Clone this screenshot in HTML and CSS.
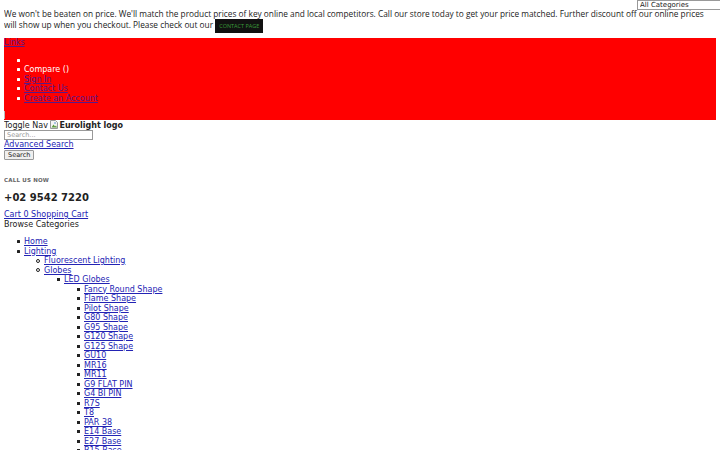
FILE: index.html
```html
<!DOCTYPE html>
<html lang="en">
<head>
<meta charset="utf-8">
<title>Eurolight</title>
<link rel="stylesheet" href="styles.css">
</head>
<body>
<select class="cat-select"><option>All Categories</option></select>
<div class="promo">We won't be beaten on price. We'll match the product prices of key online and local competitors. Call our store today to get your price matched. Further discount off our online prices will show up when you checkout. Please check out our <a class="promo-btn" href="#">CONTACT PAGE</a></div>
<div class="topbar">
  <a class="links-toggle" href="#">Links</a>
  <ul class="header-links">
    <li></li>
    <li>Compare ()</li>
    <li><a href="#">Sign In</a></li>
    <li><a href="#">Contact Us</a></li>
    <li><a href="#">Create an Account</a></li>
  </ul>
  <span class="cursor"></span>
</div>
<div class="logo-row">Toggle Nav <span class="broken"><svg width="8" height="9" viewBox="0 0 8 9"><path d="M0.5 0.5h5l2 2v6h-7z" fill="#f4f4f4" stroke="#9a9a9a"/><path d="M1.5 7.5l2-3 1.5 2 1-1 1 2z" fill="#5a9a3a"/><circle cx="5" cy="3" r="0.8" fill="#4a86c8"/></svg></span><b>Eurolight logo</b></div>
<form class="search">
  <input class="search-input" type="text" placeholder="Search...">
  <a class="adv" href="#">Advanced Search</a>
  <button class="search-btn" type="button">Search</button>
</form>
<div class="call">
  <div class="call-label">CALL US NOW</div>
  <div class="call-phone">+02 9542 7220</div>
</div>
<a class="cart" href="#">Cart 0 Shopping Cart</a>
<div class="browse">Browse Categories</div>
<ul class="cats">
  <li><a href="#">Home</a></li>
  <li><a href="#">Lighting</a>
    <ul>
      <li><a href="#">Fluorescent Lighting</a></li>
      <li><a href="#">Globes</a>
        <ul>
          <li><a href="#">LED Globes</a>
            <ul>
              <li><a href="#">Fancy Round Shape</a></li>
              <li><a href="#">Flame Shape</a></li>
              <li><a href="#">Pilot Shape</a></li>
              <li><a href="#">G80 Shape</a></li>
              <li><a href="#">G95 Shape</a></li>
              <li><a href="#">G120 Shape</a></li>
              <li><a href="#">G125 Shape</a></li>
              <li><a href="#">GU10</a></li>
              <li><a href="#">MR16</a></li>
              <li><a href="#">MR11</a></li>
              <li><a href="#">G9 FLAT PIN</a></li>
              <li><a href="#">G4 BI PIN</a></li>
              <li><a href="#">R7S</a></li>
              <li><a href="#">T8</a></li>
              <li><a href="#">PAR 38</a></li>
              <li><a href="#">E14 Base</a></li>
              <li><a href="#">E27 Base</a></li>
              <li><a href="#">B15 Base</a></li>
              <li><a href="#">B22 Base</a></li>
            </ul>
          </li>
        </ul>
      </li>
    </ul>
  </li>
</ul>
</body>
</html>
```
FILE: styles.css
```css
html {
  overflow: hidden;
}
body {
  margin: 4px;
  font-family: "DejaVu Sans", sans-serif;
  font-size: 8px;
  line-height: 9.5px;
  color: #222;
  background: #fff;
}
a {
  color: #2323b4;
}
ul {
  list-style: none;
}
li::before {
  content: "";
  display: inline-block;
  width: 3px;
  height: 3px;
  margin-left: -7px;
  margin-right: 4px;
  vertical-align: 1px;
  background: currentColor;
  border-radius: 0.5px;
}
.cat-select {
  position: absolute;
  top: 0;
  left: 637px;
  width: 100px;
  height: 10px;
  padding: 0 0 0 2px;
  margin: 0;
  font-family: "DejaVu Sans", sans-serif;
  font-size: 7px;
  line-height: 8px;
  border: 1px solid #999;
  border-radius: 0;
  background: #fff;
  color: #222;
  appearance: none;
}
.promo {
  padding-top: 4px;
  font-family: "Open Sans", sans-serif;
  font-size: 8.3px;
  line-height: 11px;
  color: #222;
}
.promo-btn {
  display: inline-block;
  padding: 0 4px;
  height: 14px;
  line-height: 14px;
  background: #111;
  color: #3a9a3a;
  font-size: 5.5px;
  text-decoration: none;
  vertical-align: baseline;
}
.topbar {
  margin-top: 5px;
  background: #ff0000;
  color: #fff;
  height: 82px;
}
.topbar a {
  color: #551a8b;
}
.links-toggle {
  display: block;
}
.header-links {
  margin: 8px 0;
  padding-left: 20px;
}
.header-links li {
  height: 9.5px;
}
.cursor {
  display: block;
  width: 0;
  height: 8px;
  border-left: 1px solid #bbb;
  margin-top: 1px;
}
.logo-row {
  height: 10px;
}
.broken {
  display: inline-block;
  vertical-align: -1px;
  margin-right: 1px;
}
.search {
  display: flex;
  flex-direction: column;
  align-items: flex-start;
  margin: 0;
}
.search-input {
  width: 89px;
  height: 10px;
  box-sizing: border-box;
  margin: 0;
  padding: 0 2px;
  border: 1px solid #999;
  font-family: "DejaVu Sans", sans-serif;
  font-size: 6.5px;
}
.search-input::placeholder {
  color: #999;
}
.adv {
  display: block;
  height: 10px;
  line-height: 10px;
}
.search-btn {
  height: 10px;
  box-sizing: border-box;
  margin: 0;
  padding: 0 3px;
  border: 1px solid #999;
  border-radius: 1px;
  background: #efefef;
  font-family: "DejaVu Sans", sans-serif;
  font-size: 6.5px;
  line-height: 8px;
  color: #222;
}
.call {
  padding-top: 16px;
}
.call-label {
  font-size: 5.5px;
  font-weight: bold;
  color: #666;
  letter-spacing: 0.2px;
  line-height: 8px;
}
.call-phone {
  margin-top: 8px;
  font-size: 10px;
  font-weight: bold;
  line-height: 12px;
  color: #222;
}
.cart {
  display: block;
  margin-top: 6px;
}
.cats {
  margin: 8px 0;
  padding-left: 20px;
}
.cats ul {
  margin: 0;
  padding-left: 20px;
}
.cats ul > li::before {
  width: 4px;
  height: 4px;
  box-sizing: border-box;
  margin-left: -8px;
  background: none;
  border: 1px solid currentColor;
  border-radius: 50%;
  vertical-align: 0.5px;
}
.cats ul ul > li::before {
  width: 3px;
  height: 3px;
  margin-left: -7px;
  border: none;
  border-radius: 0;
  background: currentColor;
  vertical-align: 1px;
}
```
